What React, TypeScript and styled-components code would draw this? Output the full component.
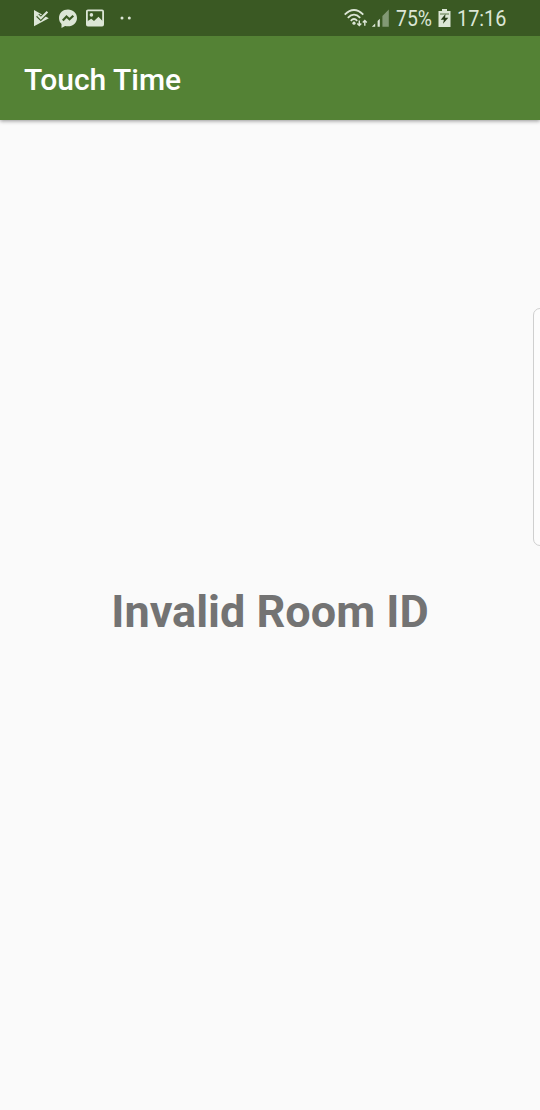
import React from "react";
import styled, { createGlobalStyle } from "styled-components";

const GlobalStyle = createGlobalStyle`
  *, *::before, *::after { box-sizing: border-box; }
  html, body { margin: 0; padding: 0; overflow: hidden; }
  body { background: #fafafa; font-family: Roboto, sans-serif; -webkit-font-smoothing: antialiased; }
`;

const Screen = styled.div`
  position: relative;
  display: flex;
  flex-direction: column;
  width: 540px;
  height: 1110px;
  overflow: hidden;
  background: #fafafa;
`;

const StatusBar = styled.div`
  position: relative;
  z-index: 1;
  display: flex;
  flex: none;
  justify-content: space-between;
  height: 36px;
  padding: 0 33px 0 33px;
  background: #3a5923;
  color: #dce6d6;
`;

const StatusGroup = styled.div`
  display: flex;
  align-items: center;
  height: 36px;
`;

const StatusIcon = styled.svg<{ $gap?: number }>`
  display: block;
  flex: none;
  margin-right: ${({ $gap }) => $gap ?? 0}px;
`;

const StatusText = styled.span<{ $width: number; $scale: number }>`
  width: ${({ $width }) => $width}px;
  font-size: 22px;
  line-height: 36px;
  white-space: nowrap;
  padding-top: 2px;
  transform: scaleX(${({ $scale }) => $scale});
  transform-origin: left center;
`;

const AppBar = styled.header`
  display: flex;
  flex: none;
  align-items: center;
  height: 84px;
  padding: 4px 24px 0;
  background: #548235;
  box-shadow: 0 1px 4px rgba(0, 0, 0, 0.42);
`;

const Title = styled.h1`
  margin: 0;
  color: #fff;
  font-size: 30px;
  font-weight: 500;
  line-height: 36px;
  white-space: nowrap;
`;

const Content = styled.main`
  display: flex;
  flex: 1;
  align-items: center;
  justify-content: center;
  padding-bottom: 6px;
`;

const Message = styled.p`
  margin: 0;
  color: #737373;
  font-size: 45px;
  font-weight: 700;
  line-height: 54px;
  white-space: nowrap;
`;

const EdgeHandle = styled.div`
  position: absolute;
  top: 308px;
  right: -8px;
  width: 15px;
  height: 238px;
  border: 1px solid #cfcfcf;
  border-radius: 7px;
  background: #fcfcfc;
`;

export default function App() {
  return (
    <>
      <GlobalStyle />
      <Screen>
        <StatusBar>
          <StatusGroup>
            <StatusIcon width="16" height="18" viewBox="0 0 16 18" $gap={10}>
              <path d="M1 1 15.8 9.2 1 17.2Z" fill="currentColor" />
              <path d="M4.6 6.2 7.8 9.4 14.8 2.4" fill="none" stroke="#3a5923" strokeWidth="4.2" />
              <path d="M4.6 6 7.8 9.2 14.4 2.8" fill="none" stroke="currentColor" strokeWidth="2.1" />
            </StatusIcon>
            <StatusIcon width="18" height="19" viewBox="0 0 18 19" $gap={9}>
              <path d="M9 .5C4 .5 0 4 0 8.9c0 2.5 1 4.6 2.5 6V19l3.6-2.1c.9.3 1.9.4 2.9.4 5 0 9-3.6 9-8.4S14 .5 9 .5Z" fill="currentColor" />
              <path d="M3.8 11.5 7.5 7.5l3 2.8 3.8-3.5" fill="none" stroke="#3a5923" strokeWidth="2.2" />
            </StatusIcon>
            <StatusIcon width="18" height="18" viewBox="0 0 18 18" $gap={16}>
              <rect x=".9" y="1.4" width="16.2" height="15.2" rx="1" fill="none" stroke="currentColor" strokeWidth="1.8" />
              <circle cx="5.4" cy="5.9" r="1.8" fill="currentColor" />
              <path d="M1 15.5V12.5L5.2 9.8 8 12 12.5 7.8 17 12.5V16.5H1Z" fill="currentColor" />
            </StatusIcon>
            <StatusIcon width="12" height="4" viewBox="0 0 12 4">
              <circle cx="2" cy="2" r="1.5" fill="currentColor" />
              <circle cx="9.3" cy="2" r="1.5" fill="currentColor" />
            </StatusIcon>
          </StatusGroup>
          <StatusGroup>
            <StatusIcon width="25" height="20" viewBox="0 0 25 20" $gap={2}>
              <g fill="none" stroke="currentColor" strokeWidth="1.8">
                <path d="M.7 6.6Q10-2.6 19.3 6.6" />
                <path d="M3.8 9.8Q10 3.4 16.2 9.8" />
                <path d="M6.8 12.8Q10 9.2 13.2 12.8" />
              </g>
              <circle cx="10" cy="15.2" r="1.6" fill="currentColor" />
              <g fill="none" stroke="currentColor" strokeWidth="1.4">
                <path d="M15.3 12.4V17.4M13.3 15.6l2 2 2-2" />
                <path d="M20.8 17.8V12.8M18.8 14.6l2-2 2 2" />
              </g>
            </StatusIcon>
            <StatusIcon width="18" height="20" viewBox="0 0 18 20" $gap={7}>
              <path d="M.8 18.8 4.2 15.6v3.2ZM6.6 13 8.8 10.8v8H6.6Z" fill="currentColor" />
              <path d="M11.4 8 17.8 1.5V18.8H11.4Z" fill="currentColor" opacity=".45" />
            </StatusIcon>
            <StatusText $width={42} $scale={0.88}>75%</StatusText>
            <StatusIcon width="13" height="18" viewBox="0 0 13 18" $gap={6}>
              <path d="M4 0h5v2h3.5v16H.5V2H4Z" fill="currentColor" />
              <path d="M2 4h9v2H2Z" fill="#3a5923" opacity=".4" />
              <path d="M7.5 5 2.7 10.8h3.2L5 14.8l5.3-6H7.1Z" fill="#263d17" />
            </StatusIcon>
            <StatusText $width={50} $scale={0.9}>17:16</StatusText>
          </StatusGroup>
        </StatusBar>
        <AppBar>
          <Title>Touch Time</Title>
        </AppBar>
        <Content>
          <Message>Invalid Room ID</Message>
        </Content>
        <EdgeHandle />
      </Screen>
    </>
  );
}
